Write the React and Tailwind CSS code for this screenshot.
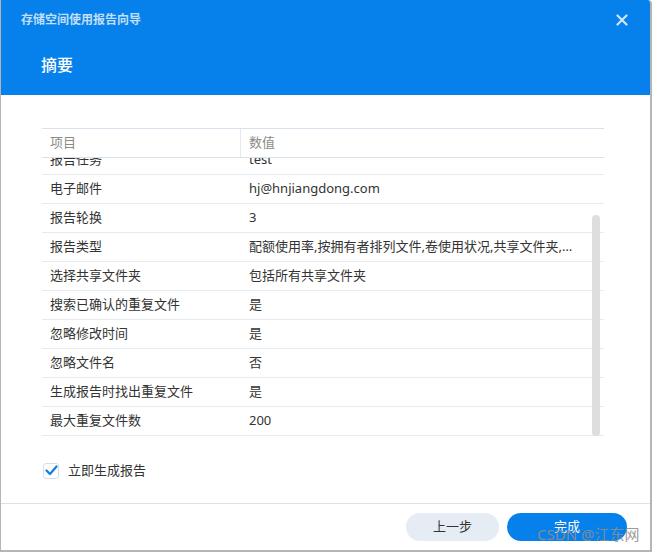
import React from "react";

const rows = [
  ["报告任务", "test"],
  ["电子邮件", "hj@hnjiangdong.com"],
  ["报告轮换", "3"],
  ["报告类型", "配额使用率,按拥有者排列文件,卷使用状况,共享文件夹,文件类型,大文件"],
  ["选择共享文件夹", "包括所有共享文件夹"],
  ["搜索已确认的重复文件", "是"],
  ["忽略修改时间", "是"],
  ["忽略文件名", "否"],
  ["生成报告时找出重复文件", "是"],
  ["最大重复文件数", "200"],
];

export default function App() {
  return (
    <div
      className="relative w-[652px] h-[552px] bg-white border-l border-r-2 border-b-2 border-[#b5b5b5] rounded-tr-[4px] overflow-hidden flex flex-col text-[#333]"
      style={{ fontFamily: '"Noto Sans", "Noto Sans CJK SC", sans-serif' }}
    >
      {/* header */}
      <div className="h-[95px] bg-[#0680ea] flex flex-col shrink-0">
        <div className="h-[40px] flex items-center justify-between pl-[20px] pr-[22px]">
          <span className="text-[12px] font-bold text-white/75 leading-none">存储空间使用报告向导</span>
          <svg width="12" height="12" viewBox="0 0 12 12" className="text-white/80">
            <path d="M1.5 1.5 L10.5 10.5 M10.5 1.5 L1.5 10.5" stroke="currentColor" strokeWidth="2.2" strokeLinecap="round" />
          </svg>
        </div>
        <div className="pl-[40px] pt-[17px] text-[16px] font-medium text-white leading-none">摘要</div>
      </div>

      {/* body */}
      <div className="flex-1 flex flex-col px-[40px] pt-[33px]">
        <div className="w-[562px] ml-[1px]">
          <div className="flex h-[30px] border-t border-b border-[#d8e2ec] text-[13px] text-[#8a8a8a]">
            <div className="w-[199px] pl-[8px] flex items-center border-r border-[#e3e9ef]">项目</div>
            <div className="flex-1 pl-[8px] flex items-center">数值</div>
          </div>
          <div className="relative h-[278px] overflow-hidden">
            <div className="mt-[-12px]">
              {rows.map(([k, v], i) => (
                <div key={i} className="flex h-[29px] border-b border-[#e6ebf0] text-[13px]">
                  <div className="w-[199px] pl-[8px] flex items-center whitespace-nowrap">{k}</div>
                  <div className="flex-1 min-w-0 pl-[8px] pr-[26px] flex items-center">
                    <span className="truncate">{v}</span>
                  </div>
                </div>
              ))}
            </div>
            <div className="absolute right-[4px] top-[57px] w-[8px] h-[221px] rounded-full bg-[#dedede]" />
          </div>
        </div>

        <div className="flex items-center mt-[25px] ml-[2px]">
          <div className="w-[16px] h-[16px] rounded-[3px] border border-[#d5dde6] flex items-center justify-center">
            <svg width="13" height="11" viewBox="0 0 13 11">
              <path d="M1.5 5.5 L5 9 L11.5 1.5" fill="none" stroke="#0a7fe6" strokeWidth="2.2" strokeLinecap="round" strokeLinejoin="round" />
            </svg>
          </div>
          <span className="ml-[9px] text-[13px]">立即生成报告</span>
        </div>
      </div>

      {/* footer */}
      <div className="h-[47px] border-t border-[#e0e0e0] flex items-start justify-end pt-[9px] pr-[23px] gap-[8px] shrink-0">
        <button className="w-[93px] h-[28px] rounded-full bg-[#e6ecf3] text-[13px] text-[#333]">上一步</button>
        <button className="w-[120px] h-[28px] rounded-full bg-[#0680ea] text-[13px] text-white">完成</button>
      </div>

      <div className="absolute left-[536px] top-[527px] text-[15px] text-[#8e8e8e]/90 leading-none pointer-events-none">
        CSDN @江东网
      </div>
    </div>
  );
}
